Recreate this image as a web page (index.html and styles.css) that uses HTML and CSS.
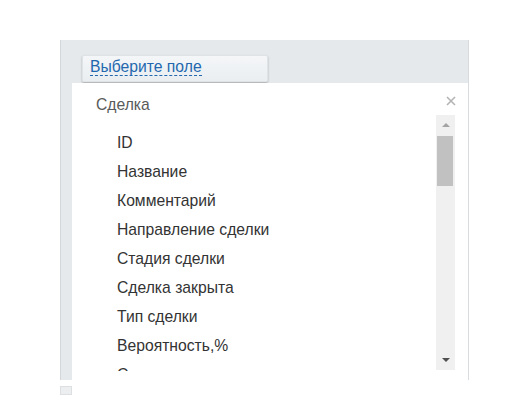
FILE: index.html
```html
<!DOCTYPE html>
<html lang="ru">
<head>
<meta charset="utf-8">
<link rel="stylesheet" href="styles.css">
</head>
<body>
<div class="frame">
  <div class="panel">
    <div class="header">
      <div class="btn"><span class="btn-text">Выберите поле</span></div>
    </div>
    <div class="popup">
      <div class="title">Сделка</div>
      <svg class="close" width="10" height="10" viewBox="0 0 10 10"><path d="M1 1L9 9M9 1L1 9" stroke="#b4b4b4" stroke-width="1.6" fill="none"/></svg>
      <div class="body">
        <ul class="list">
          <li>ID</li>
          <li>Название</li>
          <li>Комментарий</li>
          <li>Направление сделки</li>
          <li>Стадия сделки</li>
          <li>Сделка закрыта</li>
          <li>Тип сделки</li>
          <li>Вероятность,%</li>
          <li>Сумма</li>
          <li>Валюта</li>
        </ul>
        <div class="scrollbar">
          <div class="sb-btn"><span class="tri-up"></span></div>
          <div class="sb-thumb"></div>
          <div class="sb-track"></div>
          <div class="sb-btn"><span class="tri-down"></span></div>
        </div>
      </div>
    </div>
  </div>
  <div class="foot"></div>
</div>
</body>
</html>
```
FILE: styles.css
```css
html, body {
  margin: 0;
  padding: 0;
  background: #ffffff;
  font-family: "Liberation Sans", Arial, sans-serif;
}
.frame {
  margin-left: 60px;
  padding-top: 40px;
  width: 409px;
}
.panel {
  background: #e6e9ec;
  border-left: 1px solid #d3d7da;
  border-right: 1px solid #d9dcdf;
  height: 340px;
  box-sizing: border-box;
}
.header {
  height: 43px;
  padding: 15px 0 0 21px;
  box-sizing: border-box;
}
.btn {
  width: 186px;
  height: 27px;
  box-sizing: border-box;
  background: linear-gradient(#f4f6f8, #eaeef1);
  border: 1px solid #dfe3e6;
  border-radius: 2px;
  box-shadow: 0 1px 2px rgba(0, 0, 0, 0.28);
  padding: 2px 0 0 7px;
}
.btn-text {
  font-size: 15.7px;
  line-height: 18px;
  color: #2368ae;
  border-bottom: 1px dashed #2368ae;
}
.popup {
  position: relative;
  margin-left: 11px;
  background: #ffffff;
  height: 297px;
}
.title {
  padding: 12px 0 0 24px;
  line-height: 20px;
  height: 32px;
  box-sizing: border-box;
  font-size: 15.7px;
  color: #5a5a5a;
}
.close {
  position: absolute;
  left: 374px;
  top: 13px;
}
.body {
  display: flex;
  align-items: flex-start;
}
.list {
  flex: 1;
  list-style: none;
  margin: 0;
  padding: 13px 0 0 45px;
  height: 256px;
  box-sizing: border-box;
  overflow: hidden;
}
.list li {
  font-size: 15.7px;
  line-height: 29px;
  color: #333333;
}
.scrollbar {
  width: 19px;
  height: 255px;
  margin-right: 13px;
  display: flex;
  flex-direction: column;
  background: #f0f0f0;
}
.sb-btn {
  height: 20px;
  display: flex;
  align-items: center;
  justify-content: center;
}
.tri-up {
  width: 0;
  height: 0;
  border-left: 4px solid transparent;
  border-right: 4px solid transparent;
  border-bottom: 4px solid #a3a3a3;
}
.tri-down {
  width: 0;
  height: 0;
  border-left: 4px solid transparent;
  border-right: 4px solid transparent;
  border-top: 4px solid #505050;
}
.sb-thumb {
  height: 50px;
  margin: 1px 2px 0 1px;
  background: #c1c1c1;
}
.sb-track {
  flex: 1;
}
.foot {
  width: 12px;
  height: 9px;
  margin-top: 6px;
  background: #eceef0;
  border: 1px solid #dde0e3;
  box-sizing: border-box;
}
```
